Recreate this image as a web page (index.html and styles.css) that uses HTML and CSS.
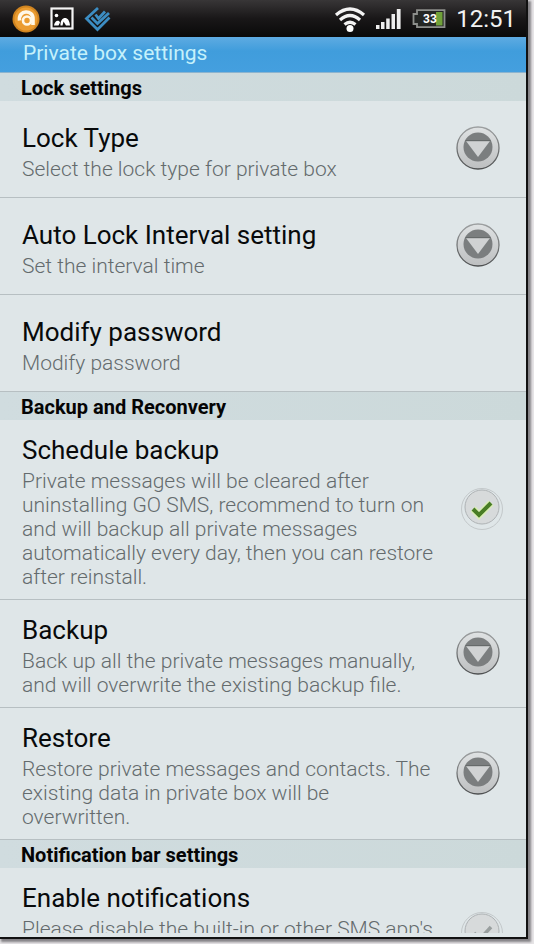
FILE: index.html
```html
<!DOCTYPE html>
<html lang="en">
<head>
    <meta charset="UTF-8">
    <meta name="viewport" content="width=device-width, initial-scale=1.0">
    <title>Private box settings</title>
    <link rel="stylesheet" href="styles.css">
</head>
<body>

    <svg class="defs" aria-hidden="true">
        <defs>
            <linearGradient id="ring" x1="0" y1="0" x2="0" y2="1">
                <stop offset="0" stop-color="#dfe2e3"/>
                <stop offset="1" stop-color="#bdbfc0"/>
            </linearGradient>
            <linearGradient id="rim" x1="0" y1="0" x2="0" y2="1">
                <stop offset="0" stop-color="#9da0a1"/>
                <stop offset="1" stop-color="#4d4f50"/>
            </linearGradient>
            <symbol id="arrow" viewBox="0 0 44 44">
                <circle cx="22" cy="22" r="21" fill="url(#ring)" stroke="url(#rim)" stroke-width="1.3"/>
                <circle cx="22" cy="21" r="14.5" fill="#7b7e7f"/>
                <path d="M10 15h24L22 31z" fill="#d0d2d3"/>
                <path d="M9.500 14.700h25" stroke="#626566"/>
            </symbol>
        </defs>
    </svg>

    <div class="screen">
        <header class="status-bar">
            <svg width="28" height="28" viewBox="0 0 28 28">
                <circle cx="14" cy="14" r="13.5" fill="#cf8420"/>
                <circle cx="14" cy="14" r="11.5" fill="#eb9c30"/>
                <path d="M7.500 15.500C6 4.500 21.500 4.500 21 14v6" fill="none" stroke="#fff8e8" stroke-width="3.600"/>
                <circle cx="15" cy="15.500" r="4" fill="none" stroke="#fff8e8" stroke-width="2.600"/>
            </svg>
            <svg width="24" height="24" viewBox="0 0 24 24">
                <rect x="1.500" y="1.500" width="21" height="20" fill="#151313" stroke="#f4f4f4" stroke-width="2.200"/>
                <circle cx="6.500" cy="8.500" r="1.800" fill="#fff"/>
                <path d="M4 18.500c.5-5 5-6 6-3l-1.500 3z" fill="#fff"/>
                <path d="M10.500 18.500C10 9 19.500 8 20 18.500h-4l-2.500-4-1 4z" fill="#fff"/>
            </svg>
            <svg width="28" height="26" viewBox="0 0 28 26">
                <path d="M14 2L2.500 12.500 13.500 23.500 25.500 11.500" fill="none" stroke="#3c8dc3" stroke-width="2.800"/>
                <path d="M7.500 11.500l6 6L25 7" fill="none" stroke="#3c8dc3" stroke-width="2.800"/>
                <path d="M11.500 8.500l3 4L21 5.500" fill="none" stroke="#3c8dc3" stroke-width="2.800"/>
            </svg>
            <span class="spacer"></span>
            <svg width="32" height="28" viewBox="0 0 32 28">
                <path d="M2 10Q16-2 30 10M6 15Q16 6 26 15M10.500 19.500Q16 15 21.500 19.500" fill="none" stroke="#f3f3f3" stroke-width="3.200"/>
                <circle cx="16" cy="23.500" r="3.500" fill="#fff"/>
            </svg>
            <svg width="26" height="24" viewBox="0 0 26 24">
                <path d="M0 18h3.500v4H0zM5 15h3.500v7H5zM10.200 11.500h3.500V22h-3.500zM15.500 7H19v15h-3.500zM20.800 2h3.800v20h-3.800z" fill="#ededed"/>
            </svg>
            <svg class="battery" width="34" height="20" viewBox="0 0 34 20">
                <path d="M5 1.200h27.500v17H5V15H1.500V5H5z" fill="#242624" stroke="#8d8f8c" stroke-width="1.800"/>
                <path d="M24 3h6.500v13.500H24z" fill="#70a13a"/>
                <text x="11" y="14">33</text>
            </svg>
            <time>12:51</time>
        </header>

        <h1>Private box settings</h1>

        <main>
            <h2>Lock settings</h2>
            <div class="row">
                <div class="text">
                    <h3 id="lock-type">Lock Type</h3>
                    <p>Select the lock type for private box</p>
                </div>
                <button type="button" class="more" aria-labelledby="lock-type"><svg width="44" height="44"><use href="#arrow"/></svg></button>
            </div>
            <div class="row">
                <div class="text">
                    <h3 id="auto-lock">Auto Lock Interval setting</h3>
                    <p>Set the interval time</p>
                </div>
                <button type="button" class="more" aria-labelledby="auto-lock"><svg width="44" height="44"><use href="#arrow"/></svg></button>
            </div>
            <div class="row">
                <div class="text">
                    <h3>Modify password</h3>
                    <p>Modify password</p>
                </div>
            </div>

            <h2>Backup and Reconvery</h2>
            <div class="row">
                <div class="text">
                    <h3><label for="schedule">Schedule backup</label></h3>
                    <p>Private messages will be cleared after<br>uninstalling GO SMS, recommend to turn on<br>and will backup all private messages<br>automatically every day, then you can restore<br>after reinstall.</p>
                </div>
                <input type="checkbox" class="check" id="schedule" checked>
            </div>
            <div class="row">
                <div class="text">
                    <h3 id="backup">Backup</h3>
                    <p>Back up all the private messages manually,<br>and will overwrite the existing backup file.</p>
                </div>
                <button type="button" class="more" aria-labelledby="backup"><svg width="44" height="44"><use href="#arrow"/></svg></button>
            </div>
            <div class="row">
                <div class="text">
                    <h3 id="restore">Restore</h3>
                    <p>Restore private messages and contacts. The<br>existing data in private box will be<br>overwritten.</p>
                </div>
                <button type="button" class="more" aria-labelledby="restore"><svg width="44" height="44"><use href="#arrow"/></svg></button>
            </div>

            <h2>Notification bar settings</h2>
            <div class="row row-tall">
                <div class="text">
                    <h3><label for="notify">Enable notifications</label></h3>
                    <p>Please disable the built-in or other SMS app's</p>
                </div>
                <input type="checkbox" class="check" id="notify">
            </div>
        </main>
    </div>

</body>
</html>
```
FILE: styles.css
```css
* {
    box-sizing: border-box;
}

body {
    margin: 0;
    height: 100vh;
    padding: 0 6px 5px 0;
    background: #e6e4e6;
    font-family: Roboto, sans-serif;
    overflow: hidden;
}

.defs {
    position: absolute;
    width: 0;
    height: 0;
}

.screen {
    display: flex;
    flex-direction: column;
    height: 100%;
    padding-bottom: 4px;
    overflow: hidden;
    background: #dfe6e8;
    border-right: 2px solid #111;
    border-bottom: 2px solid #111;
    box-shadow: 2px 2px 2px 1px #858387;
}

.status-bar {
    display: flex;
    align-items: center;
    gap: 10px;
    flex: none;
    height: 37px;
    padding: 0 10px 0 12px;
    background: linear-gradient(#383637, #191718 50%, #090909);
    color: #f2f2f2;
}

.status-bar svg {
    flex: none;
}

.spacer {
    flex: 1;
}

.status-bar time {
    font-size: 24px;
    line-height: 36px;
}

.battery text {
    font-size: 12px;
    font-weight: 700;
    fill: #fff;
}

h1,
h2,
h3,
p {
    margin: 0;
}

h1 {
    flex: none;
    height: 36px;
    padding-left: 23px;
    background: linear-gradient(#5eabe2, #409ddc 40%, #449fdf);
    border-bottom: 1px solid #8cb4cf;
    color: #c5f1fb;
    font-size: 21px;
    font-weight: 400;
    line-height: 33px;
}

main {
    flex: 1;
    min-height: 0;
    overflow: hidden;
}

h2 {
    height: 28px;
    padding-left: 21px;
    background: linear-gradient(90deg, #d0dcdf, #ccd9da);
    color: #050505;
    font-size: 20px;
    font-weight: 700;
    line-height: 30px;
}

.row {
    display: flex;
    align-items: center;
    justify-content: space-between;
    min-height: 97px;
    padding: 14px 25px 10px 22px;
    border-bottom: 1px solid #b7bfc2;
}

.row-tall {
    min-height: 132px;
}

.row-tall .text {
    align-self: flex-start;
}

.text {
    min-width: 0;
    white-space: nowrap;
}

h3 {
    margin-bottom: 3px;
    color: #080a0b;
    font-size: 26px;
    font-weight: 400;
    line-height: 32px;
}

p {
    color: #646b6d;
    font-size: 21px;
    font-weight: 300;
    line-height: 24px;
}

.more {
    flex: none;
    height: 44px;
    margin: 0 1px 6px 0;
    padding: 0;
    border: 0;
    border-radius: 50%;
    background: none;
    cursor: pointer;
}

.more svg {
    display: block;
}

.check {
    appearance: none;
    flex: none;
    width: 42px;
    height: 42px;
    margin: 0 -2px 6px 0;
    border: 1px solid #c3c8ca;
    border-radius: 50%;
    background: url("data:image/svg+xml,%3Csvg xmlns='http://www.w3.org/2000/svg' viewBox='0 0 40 40'%3E%3Ccircle cx='20' cy='18' r='17' fill='%23d7dadb' stroke='%23aeb2b4'/%3E%3Cpath d='M12 20l6 6L29 14' fill='none' stroke='%23999f9f' stroke-width='3.500'/%3E%3C/svg%3E") center / 100%;
    cursor: pointer;
}

.check:checked {
    background-image: url("data:image/svg+xml,%3Csvg xmlns='http://www.w3.org/2000/svg' viewBox='0 0 40 40'%3E%3Ccircle cx='20' cy='18' r='17' fill='%23d7dadb' stroke='%23aeb2b4'/%3E%3Cpath d='M11 20l6 6L29 14' fill='none' stroke='%23d9edb5' stroke-width='7'/%3E%3Cpath d='M11 20l6 6L29 14' fill='none' stroke='%23497d25' stroke-width='4'/%3E%3C/svg%3E");
}
```
